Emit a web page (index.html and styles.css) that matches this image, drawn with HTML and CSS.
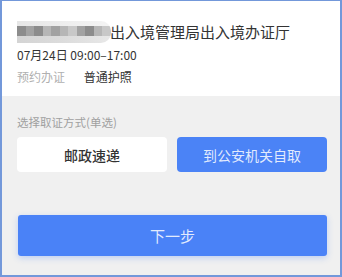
FILE: index.html
```html
<!DOCTYPE html>
<html lang="zh-CN">

<head>
    <meta charset="UTF-8">
    <meta name="viewport" content="width=device-width, initial-scale=1.0">
    <title>选择取证方式</title>
    <link rel="stylesheet" href="styles.css">
</head>

<body>
    <div class="frame">
        <div class="info">
            <div class="title">
                <!-- pixelated (hidden) part of the office name -->
                <div class="mosaic">
                    <span class="m1"></span><span class="m2"></span><span class="m1"></span><span class="m3"></span><span class="m2"></span><span class="m3"></span><span class="m4"></span><span class="m2"></span><span class="m1"></span><span class="m3"></span><span class="m4"></span>
                </div>
                <span class="title-text">出入境管理局出入境办证厅</span>
            </div>
            <div class="time">07月24日 09:00–17:00</div>
            <div class="kind">
                <span class="kind-label">预约办证</span>
                <span class="kind-value">普通护照</span>
            </div>
        </div>

        <div class="pick">
            <div class="pick-label">选择取证方式(单选)</div>
            <div class="options">
                <div class="option">邮政速递</div>
                <div class="option selected">到公安机关自取</div>
            </div>
            <div class="next">下一步</div>
        </div>
    </div>
</body>

</html>
```

FILE: styles.css
```css
* {
    margin: 0;
    padding: 0;
    box-sizing: border-box;
}

body {
    width: 342px;
    height: 277px;
    font-family: "Noto Sans CJK SC", "Noto Sans", sans-serif;
    background-color: #f0f0f0;
    overflow: hidden;
}

.frame {
    height: 277px;
    display: flex;
    flex-direction: column;
    border: 2px solid #7398da;
    border-top-width: 1px;
}

/* Top white card with office info */
.info {
    height: 95px;
    background-color: #fff;
    padding: 20px 13px 0 15px;
}

.title {
    height: 22px;
    display: flex;
    align-items: center;
}

.mosaic {
    width: 94px;
    height: 22px;
    display: grid;
    grid-template-columns: repeat(11, 1fr);
    grid-template-rows: 5px 10px 7px;
    grid-auto-flow: column;
    border-radius: 0 10px 10px 0;
    overflow: hidden;
    margin-right: -1px;
}

.mosaic span:nth-child(n) {
    grid-row: 2;
}

.mosaic::before,
.mosaic::after {
    content: "";
    grid-column: 1 / -1;
}

.mosaic::before {
    grid-row: 1;
    background: linear-gradient(90deg, #e6e6e6, #eeeeee 50%, #f4f4f4);
}

.mosaic::after {
    grid-row: 3;
    background: linear-gradient(90deg, #d4d4d4, #dcdcdc 50%, #e8e8e8);
}

.m1 { background-color: #8c8c8c; }
.m2 { background-color: #a2a2a2; }
.m3 { background-color: #b6b6b6; }
.m4 { background-color: #c8c8c8; }

.title-text {
    font-size: 15px;
    color: #333;
    line-height: 22px;
}

.time {
    margin-top: 4px;
    font-size: 12px;
    line-height: 16px;
    color: #333;
}

.kind {
    margin-top: 6px;
    font-size: 12px;
    line-height: 16px;
}

.kind-label {
    color: #b0b0b0;
    margin-right: 16px;
}

.kind-value {
    color: #333;
}

/* Grey area with pick-up options */
.pick {
    flex: 1;
    padding: 19px 13px 0 15px;
}

.pick-label {
    font-size: 11.5px;
    line-height: 14px;
    color: #a0a0a0;
}

.options {
    margin-top: 8px;
    display: grid;
    grid-template-columns: 1fr 1fr;
    gap: 10px;
}

.option {
    height: 35px;
    display: flex;
    align-items: center;
    justify-content: center;
    background-color: #fff;
    border-radius: 4px;
    font-size: 14px;
    font-weight: 500;
    color: #333;
}

.option.selected {
    background-color: #4b83f6;
    color: rgba(255, 255, 255, 0.85);
    font-weight: 400;
}

.next {
    margin-top: 43px;
    margin-left: 1px;
    height: 41px;
    display: flex;
    align-items: center;
    justify-content: center;
    background-color: #4a82f7;
    border-radius: 3px;
    box-shadow: 0 2px 6px rgba(74, 130, 247, 0.3);
    font-size: 15px;
    color: rgba(255, 255, 255, 0.85);
}
```
